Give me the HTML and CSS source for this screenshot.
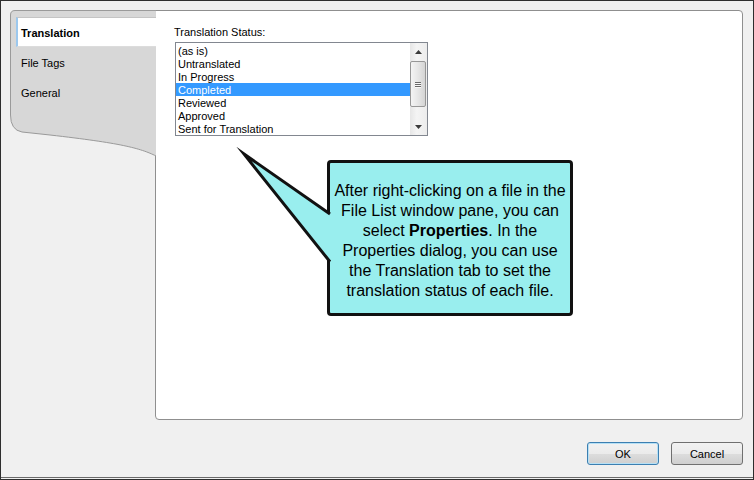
FILE: index.html
```html
<!DOCTYPE html>
<html lang="en">
<head>
    <meta charset="UTF-8">
    <title>Properties</title>
    <link rel="stylesheet" href="styles.css">
</head>
<body>
    <div class="window">
        <div class="main">
            <div class="tabs">
                <svg class="tabs-bg" width="146" height="150" viewBox="0 0 146 150">
                    <path class="tabs-fill" d="M146,0.5 H5 Q0.5,0.5 0.5,5 V105 Q0.5,120 12,122 L40,125 C110,133 130,138 146,146 Z"/>
                    <path class="tabs-edge" d="M146,0.5 H5 Q0.5,0.5 0.5,5 V105 Q0.5,120 12,122 L40,125 C110,133 130,138 146,146"/>
                </svg>
                <div class="tab active">Translation</div>
                <div class="tab">File Tags</div>
                <div class="tab">General</div>
            </div>
            <div class="panel">
                <div class="label">Translation Status:</div>
                <div class="listbox">
                    <div class="items">
                        <div class="item">(as is)</div>
                        <div class="item">Untranslated</div>
                        <div class="item">In Progress</div>
                        <div class="item selected">Completed</div>
                        <div class="item">Reviewed</div>
                        <div class="item">Approved</div>
                        <div class="item">Sent for Translation</div>
                    </div>
                    <div class="scrollbar">
                        <div class="sb-btn">
                            <svg width="7" height="4" viewBox="0 0 7 4"><path d="M0,4 L3.5,0 L7,4 Z" fill="#3a3a3a"/></svg>
                        </div>
                        <div class="thumb">
                            <div class="grip"></div>
                            <div class="grip"></div>
                            <div class="grip"></div>
                        </div>
                        <div class="track"></div>
                        <div class="sb-btn">
                            <svg width="7" height="4" viewBox="0 0 7 4"><path d="M0,0 L7,0 L3.5,4 Z" fill="#3a3a3a"/></svg>
                        </div>
                    </div>
                </div>

                <div class="callout">
                    <p>After right-clicking on a file in the<br>
                    File List window pane, you can<br>
                    select <b>Properties</b>. In the<br>
                    Properties dialog, you can use<br>
                    the Translation tab to set the<br>
                    translation status of each file.</p>
                </div>
                <svg class="callout-tail" width="104" height="126" viewBox="0 0 104 126">
                    <path d="M14,14 L100,74.1 L100,121.8 Z" fill="#99eeee"/>
                    <path d="M100,74.1 L14,14 L100,121.8" fill="none" stroke="#111" stroke-width="3" stroke-miterlimit="12"/>
                </svg>
            </div>
        </div>
        <div class="footer">
            <button class="btn default">OK</button>
            <button class="btn">Cancel</button>
        </div>
    </div>
</body>
</html>
```

FILE: styles.css
```css
body {
    margin: 0;
    font-family: "Liberation Sans", Arial, sans-serif;
    font-size: 11px;
    color: #000;
}
.window {
    width: 754px;
    height: 480px;
    box-sizing: border-box;
    border: 1px solid #2e2e2e;
    background-color: #f0f0f0;
    box-shadow: inset 0 -1px 0 #f0f0f0, inset 0 -2px 0 #6a6a6a;
}
.main {
    display: flex;
    padding: 9px 10px 0 9px;
}
.tabs {
    position: relative;
    z-index: 2;
    width: 146px;
    margin-right: -1px;
    padding-top: 7px;
    box-sizing: border-box;
}
.tabs-bg {
    position: absolute;
    top: 0;
    left: 0;
}
.tabs-fill {
    fill: #d7d7d7;
}
.tabs-edge {
    fill: none;
    stroke: #9a9a9a;
    stroke-width: 1;
}
.tab {
    position: relative;
    height: 30px;
    box-sizing: border-box;
    display: flex;
    align-items: center;
    padding-left: 11px;
    padding-top: 1px;
}
.tab.active {
    margin-left: 6px;
    padding-left: 3px;
    background-color: #fff;
    border-left: 2px solid #9cc8ee;
    border-top: 1px solid #c4c4c4;
    border-bottom: 1px solid #dcdcdc;
    font-weight: bold;
    padding-top: 2px;
}
.panel {
    position: relative;
    flex: 1;
    height: 410px;
    box-sizing: border-box;
    background-color: #fff;
    border: 1px solid #8f8f8f;
    border-radius: 0 4px 4px 4px;
    padding: 15px 18px;
}
.label {
    line-height: 13px;
    margin-bottom: 3px;
}
.listbox {
    display: flex;
    width: 253px;
    height: 94px;
    margin-left: 1px;
    box-sizing: border-box;
    border: 1px solid #828790;
}
.items {
    flex: 1;
    padding-top: 1px;
}
.item {
    height: 13px;
    line-height: 14px;
    padding-left: 2px;
    white-space: nowrap;
}
.item.selected {
    background-color: #3399ff;
    color: #fff;
}
.scrollbar {
    width: 17px;
    display: flex;
    flex-direction: column;
    background: linear-gradient(to right, #e6e6e6, #f4f4f4 40%, #ececec);
}
.sb-btn {
    height: 17px;
    display: flex;
    align-items: center;
    justify-content: center;
}
.thumb {
    height: 46px;
    margin: 1px 1px 0 0;
    box-sizing: border-box;
    border: 1px solid #979797;
    border-radius: 2px;
    background: linear-gradient(to right, #f4f4f4, #e6e6e6 50%, #d4d4d4);
    display: flex;
    flex-direction: column;
    justify-content: center;
    align-items: center;
    gap: 1px;
}
.grip {
    width: 6px;
    height: 1px;
    background-color: #6a6a6a;
    box-shadow: 0 1px 0 #f8f8f8;
}
.track {
    flex: 1;
}
.callout {
    position: absolute;
    left: 171px;
    top: 149px;
    width: 246px;
    height: 156px;
    box-sizing: border-box;
    border: 3px solid #111;
    border-radius: 4px;
    background-color: #99eeee;
    display: flex;
    align-items: center;
    justify-content: center;
    text-align: center;
    font-size: 16px;
    line-height: 20px;
}
.callout p {
    margin: 0;
    padding-top: 6px;
}
.callout-tail {
    position: absolute;
    left: 74px;
    top: 129px;
    overflow: visible;
}
.footer {
    display: flex;
    justify-content: flex-end;
    gap: 12px;
    padding: 22px 10px 0 0;
}
.btn {
    width: 72px;
    height: 23px;
    font-family: "Liberation Sans", Arial, sans-serif;
    font-size: 11px;
    color: #000;
    border: 1px solid #707070;
    border-radius: 3px;
    background: linear-gradient(#f2f2f2 0%, #ebebeb 50%, #dddddd 51%, #cfcfcf 100%);
    padding: 0;
}
.btn.default {
    border-color: #3c7fb1;
    box-shadow: inset 0 0 0 1px #b6e0f5;
}
```
